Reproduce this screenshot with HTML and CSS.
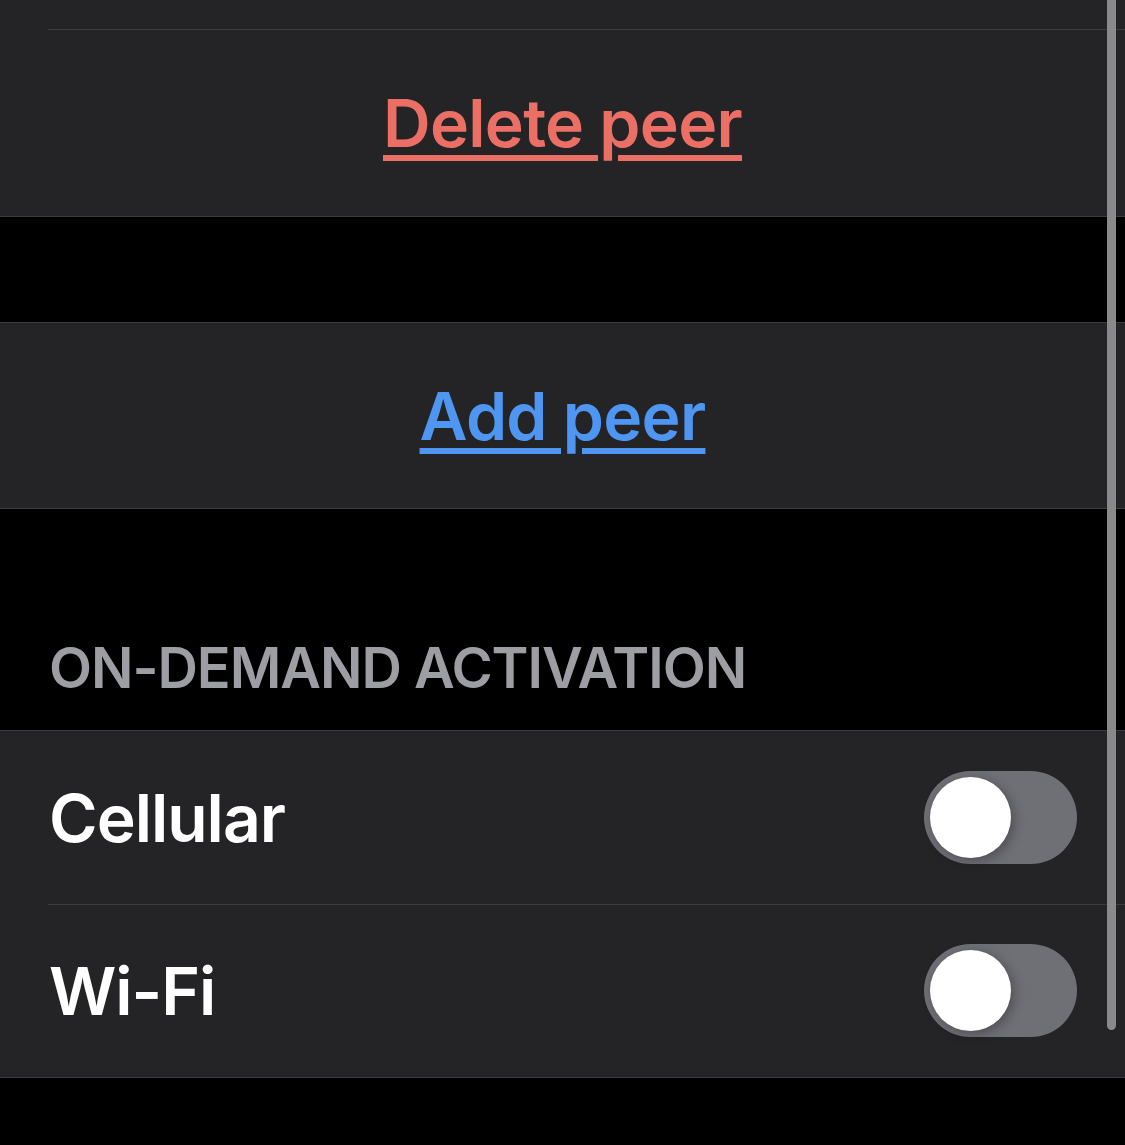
FILE: index.html
```html
<!DOCTYPE html>
<html lang="en">
<head>
    <meta charset="utf-8" />
    <meta name="viewport" content="width=device-width, initial-scale=1.0" />
    <title>Tunnel - Edit</title>
    <link rel="stylesheet" href="styles.css">
</head>
<body>
    <div class="group">
        <div class="row row-partial"></div>
        <div class="row row-button row-after-partial">
            <a href="#" class="action action-delete">Delete peer</a>
        </div>
    </div>

    <div class="gap"></div>

    <div class="group">
        <div class="row row-button">
            <a href="#" class="action action-add">Add peer</a>
        </div>
    </div>

    <div class="section-header">ON-DEMAND ACTIVATION</div>

    <div class="group">
        <div class="row row-toggle">
            <span class="label">Cellular</span>
            <span class="switch"><span class="knob"></span></span>
        </div>
        <div class="row row-toggle">
            <span class="label">Wi-Fi</span>
            <span class="switch"><span class="knob"></span></span>
        </div>
    </div>

    <div class="scrollbar"></div>
</body>
</html>
```

FILE: styles.css
```css
html, body {
    height: 100%;
}

body {
    font-family: Inter, 'Noto Sans', sans-serif;
    margin: 0;
    padding: 0;
    background-color: #000;
    color: #fff;
    overflow: hidden;
    position: relative;
}

.group {
    background-color: #242426;
    border-bottom: 1px solid #3c3c3f;
}

.gap + .group,
.section-header + .group {
    border-top: 1px solid #3c3c3f;
}

.row {
    position: relative;
    display: flex;
    align-items: center;
}

.row + .row::before {
    content: "";
    position: absolute;
    top: 0;
    left: 48px;
    right: 0;
    height: 1px;
    background-color: #3c3c3f;
}

.row-partial {
    height: 29px;
}

.row-button {
    height: 185px;
    justify-content: center;
}

.row-after-partial {
    height: 187px;
}

.action {
    font-size: 66px;
    font-weight: 600;
    letter-spacing: -0.7px;
    text-decoration: underline;
    text-decoration-thickness: 6px;
    text-underline-offset: 8px;
}

.action-delete {
    color: #ec6f66;
}

.action-add {
    color: #4f96f2;
}

.gap {
    height: 105px;
}

.section-header {
    height: 221px;
    box-sizing: border-box;
    padding: 0 0 28px 49px;
    display: flex;
    align-items: flex-end;
    font-size: 56px;
    font-weight: 600;
    color: #9d9da4;
    letter-spacing: -1.05px;
}

.row-toggle {
    height: 173px;
    padding: 0 48px 0 49px;
    justify-content: space-between;
}

.label {
    font-size: 66px;
    font-weight: 600;
    letter-spacing: -1px;
}

.switch {
    position: relative;
    width: 153px;
    height: 93px;
    border-radius: 47px;
    background-color: #6f6f76;
}

.knob {
    position: absolute;
    top: 6px;
    left: 6px;
    width: 81px;
    height: 81px;
    border-radius: 50%;
    background-color: #fff;
    box-shadow: 3px 3px 12px rgba(0, 0, 0, 0.3);
}

.scrollbar {
    position: absolute;
    top: -10px;
    right: 9px;
    width: 9px;
    height: 1040px;
    border-radius: 5px;
    background-color: #8a8a8a;
}
```
